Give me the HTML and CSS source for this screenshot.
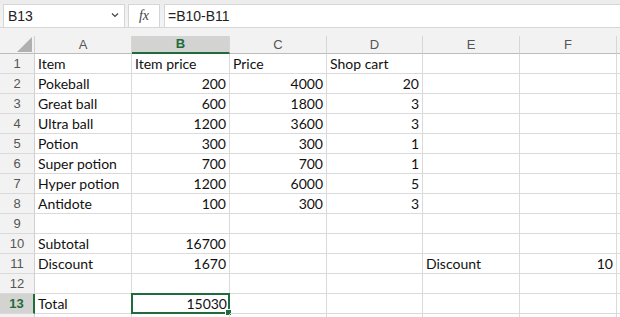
FILE: index.html
```html
<!DOCTYPE html>
<html lang="en">
<head>
	<meta charset="UTF-8">
	<title>sheet</title>
	<link rel="stylesheet" href="styles.css">
</head>
<body>
	<div class="toolbar">
		<div class="namebox">
			<span>B13</span>
			<svg class="chev" width="8" height="6" viewBox="0 0 8 6"><path d="M1 1.5 L4 4.5 L7 1.5" fill="none" stroke="#444" stroke-width="1.2"/></svg>
		</div>
		<div class="fxbox"><i>fx</i></div>
		<div class="formula">=B10-B11</div>
	</div>
	<div class="gap"></div>
	<div class="sheet">
		<div class="corner"><span class="tri"></span></div>
		<div class="colh">A</div>
		<div class="colh sel">B</div>
		<div class="colh">C</div>
		<div class="colh">D</div>
		<div class="colh">E</div>
		<div class="colh">F</div>
		<div class="colh"></div>

		<div class="rowh">1</div><div class="c">Item</div><div class="c">Item price</div><div class="c">Price</div><div class="c">Shop cart</div><div class="c"></div><div class="c"></div><div class="c"></div>
		<div class="rowh">2</div><div class="c">Pokeball</div><div class="c n">200</div><div class="c n">4000</div><div class="c n">20</div><div class="c"></div><div class="c"></div><div class="c"></div>
		<div class="rowh">3</div><div class="c">Great ball</div><div class="c n">600</div><div class="c n">1800</div><div class="c n">3</div><div class="c"></div><div class="c"></div><div class="c"></div>
		<div class="rowh">4</div><div class="c">Ultra ball</div><div class="c n">1200</div><div class="c n">3600</div><div class="c n">3</div><div class="c"></div><div class="c"></div><div class="c"></div>
		<div class="rowh">5</div><div class="c">Potion</div><div class="c n">300</div><div class="c n">300</div><div class="c n">1</div><div class="c"></div><div class="c"></div><div class="c"></div>
		<div class="rowh">6</div><div class="c">Super potion</div><div class="c n">700</div><div class="c n">700</div><div class="c n">1</div><div class="c"></div><div class="c"></div><div class="c"></div>
		<div class="rowh">7</div><div class="c">Hyper potion</div><div class="c n">1200</div><div class="c n">6000</div><div class="c n">5</div><div class="c"></div><div class="c"></div><div class="c"></div>
		<div class="rowh">8</div><div class="c">Antidote</div><div class="c n">100</div><div class="c n">300</div><div class="c n">3</div><div class="c"></div><div class="c"></div><div class="c"></div>
		<div class="rowh">9</div><div class="c"></div><div class="c"></div><div class="c"></div><div class="c"></div><div class="c"></div><div class="c"></div><div class="c"></div>
		<div class="rowh">10</div><div class="c">Subtotal</div><div class="c n">16700</div><div class="c"></div><div class="c"></div><div class="c"></div><div class="c"></div><div class="c"></div>
		<div class="rowh">11</div><div class="c">Discount</div><div class="c n">1670</div><div class="c"></div><div class="c"></div><div class="c">Discount</div><div class="c n">10</div><div class="c"></div>
		<div class="rowh">12</div><div class="c"></div><div class="c"></div><div class="c"></div><div class="c"></div><div class="c"></div><div class="c"></div><div class="c"></div>
		<div class="rowh sel">13</div><div class="c">Total</div><div class="c n active">15030<span class="handle"></span></div><div class="c"></div><div class="c"></div><div class="c"></div><div class="c"></div><div class="c"></div>
		<div class="rowh"></div><div class="c"></div><div class="c"></div><div class="c"></div><div class="c"></div><div class="c"></div><div class="c"></div><div class="c"></div>
	</div>
</body>
</html>
```

FILE: styles.css
```css
html, body {
	margin: 0;
	padding: 0;
	background: #fff;
	overflow: hidden;
}
.toolbar {
	display: flex;
	height: 27px;
	padding: 4px 0 0 3px;
	box-sizing: border-box;
	background: linear-gradient(#ececec, #f4f4f4);
	font-family: "Liberation Sans", Arial, sans-serif;
	font-size: 14px;
	color: #222;
}
.namebox {
	width: 122px;
	display: flex;
	align-items: center;
	justify-content: space-between;
	padding: 0 5px 0 4px;
	box-sizing: border-box;
	background: #fff;
	border: 1px solid #d6d6d6;
	border-bottom: none;
}
.chev {
	margin-top: -2px;
}
.fxbox {
	width: 30px;
	margin-left: 3px;
	display: flex;
	align-items: center;
	justify-content: center;
	background: #fff;
	border: 1px solid #d6d6d6;
	border-bottom: none;
	font-family: "Liberation Serif", serif;
	font-size: 14px;
	color: #444;
}
.formula {
	flex: 1;
	margin-left: 4px;
	padding-left: 3px;
	display: flex;
	align-items: center;
	background: #fff;
	border: 1px solid #d6d6d6;
	border-right: none;
	border-bottom: none;
}
.gap {
	height: 9px;
	background: #f2f2f2;
	border-top: 1px solid #d6d6d6;
	box-sizing: border-box;
}
.sheet {
	display: grid;
	grid-template-columns: 35px 97px 98px 97px 96px 97px 97px 1fr;
	grid-template-rows: 18px;
	grid-auto-rows: 20px;
	font-family: Lato, "Open Sans", sans-serif;
	font-size: 14px;
	color: #111;
}
.corner {
	position: relative;
	background: #f2f2f2;
	border-right: 1px solid #d0d0d0;
	border-bottom: 1px solid #bcbcbc;
}
.tri {
	position: absolute;
	right: 2px;
	bottom: 1px;
	width: 0;
	height: 0;
	border-left: 15px solid transparent;
	border-bottom: 15px solid #b0b0b0;
}
.colh {
	background: #f2f2f2;
	border-right: 1px solid #d6d6d6;
	border-bottom: 1px solid #bcbcbc;
	text-align: center;
	font-family: "Liberation Sans", Arial, sans-serif;
	font-size: 13px;
	line-height: 17px;
	color: #555;
}
.colh.sel {
	background: #d3d3d1;
	border-bottom: 2px solid #1f6b3c;
	color: #1f6b3c;
	font-weight: bold;
	line-height: 16px;
}
.rowh {
	background: #f2f2f2;
	border-right: 1px solid #d0d0d0;
	border-bottom: 1px solid #dadada;
	text-align: center;
	font-family: "Liberation Sans", Arial, sans-serif;
	font-size: 13px;
	line-height: 20px;
	color: #555;
}
.rowh.sel {
	background: #d3d3d1;
	border-right: 2px solid #1f6b3c;
	color: #1f6b3c;
	font-weight: bold;
}
.c {
	position: relative;
	border-right: 1px solid #dadada;
	border-bottom: 1px solid #dadada;
	padding: 0 3px;
	line-height: 20px;
	white-space: nowrap;
}
.n {
	text-align: right;
}
.active {
	border: 2px solid #1f6b3c;
	margin: -1px 0 0 -1px;
	line-height: 18px;
	padding: 0 1px 0 2px;
}
.handle {
	position: absolute;
	right: -4px;
	bottom: -4px;
	width: 5px;
	height: 5px;
	background: #1f6b3c;
	border: 1px solid #fff;
}
```
